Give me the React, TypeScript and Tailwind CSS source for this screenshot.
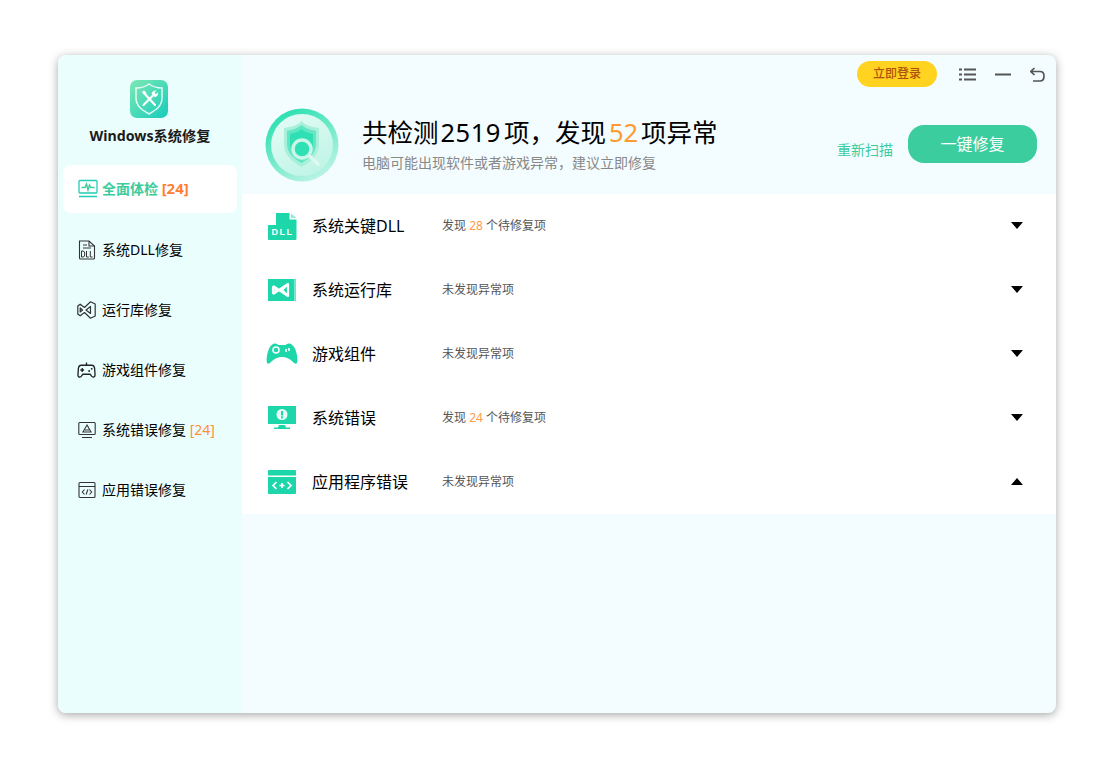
import React from "react";

const FONT = "font-['Noto_Sans','Noto_Sans_CJK_SC',sans-serif]";

const LogoIcon = () => (
  <svg width="38" height="38" viewBox="0 0 38 38">
    <defs>
      <linearGradient id="logoBg" x1="0" y1="0" x2="1" y2="1">
        <stop offset="0" stopColor="#7ee8b4" />
        <stop offset="1" stopColor="#16cdbb" />
      </linearGradient>
    </defs>
    <rect width="38" height="38" rx="7" fill="url(#logoBg)" />
    <path d="M19 4 C23 7 27 8 32 8 V18 C32 26 26 30 19 34 C12 30 6 26 6 18 V8 C11 8 15 7 19 4Z" fill="none" stroke="#fff" strokeOpacity="0.85" strokeWidth="1.5" />
    <path d="M13.500 12.500 L25 25" stroke="#fff" strokeWidth="2.200" strokeLinecap="round" />
    <path d="M12 12 L14 10.500 L16.500 13 L14.500 15 Z" fill="#fff" />
    <path d="M24 14.500 L13.500 25" stroke="#fff" strokeWidth="2.200" strokeLinecap="round" />
    <path d="M21.500 13.500 Q23 10 26.500 10.500 L24.500 12.800 L25.800 14.200 L28 12.200 Q28.500 16 24.800 17.200 Z" fill="#fff" />
  </svg>
);

const HeaderIcon = () => (
  <svg width="74" height="74" viewBox="0 0 74 74">
    <defs>
      <linearGradient id="ring" x1="0.2" y1="0" x2="0.8" y2="1">
        <stop offset="0" stopColor="#22dfad" />
        <stop offset="1" stopColor="#c4f5e7" />
      </linearGradient>
      <linearGradient id="inner" x1="0.2" y1="0" x2="0.8" y2="1">
        <stop offset="0" stopColor="#e4fbf6" />
        <stop offset="1" stopColor="#bdf4e4" />
      </linearGradient>
    </defs>
    <circle cx="37" cy="37" r="36.500" fill="url(#ring)" />
    <circle cx="37" cy="37" r="31" fill="url(#inner)" />
    <path d="M36.500 13 C40 17 46 19 54 20 V36 C54 47 46 54 36.500 59 C27 54 19 47 19 36 V20 C27 19 33 17 36.500 13Z" fill="#a8f0da" />
    <path d="M36.500 17 C40 20 45 22 51 23 V36 C51 45 44 51 36.500 55 C29 51 22 45 22 36 V23 C28 22 33 20 36.500 17Z" fill="#62e6c4" />
    <path d="M36.500 21 C40 24 44 25 48 26 V36 C48 43 42 48 36.500 51 C31 48 25 43 25 36 V26 C29 25 33 24 36.500 21Z" fill="#2fe0b5" />
    <circle cx="37" cy="41" r="9" fill="#2fe0b5" stroke="#c9f6e9" strokeWidth="3.500" />
    <path d="M45 48.500 L53 56" stroke="#def9f2" strokeWidth="3.500" strokeLinecap="round" />
  </svg>
);

const NavPulse = () => (
  <svg width="20" height="20" viewBox="0 0 20 20" fill="none" stroke="#22cdb4">
    <rect x="1" y="1.500" width="18" height="12.500" rx="1" strokeWidth="1.300" />
    <path d="M3.500 8.500 H7 L8.500 5 L10 11 L11.500 6 L12.800 8.500 H16.500" strokeWidth="1.400" stroke="#3ccd9f" />
    <path d="M1 17.500 H19" strokeWidth="1.500" />
  </svg>
);

const NavDll = () => (
  <svg width="18" height="20" viewBox="0 0 18 20" fill="none" stroke="#333" strokeWidth="1.100">
    <path d="M1.500 9 V1 H11 L16.500 6 V18 Q16.500 19 15.500 19 H2.500 Q1.500 19 1.500 18 V9" />
    <path d="M11 1 V6 H16.500 M5 5 H9 M5 8 H13" />
    <path d="M3.500 11 V17 H5 Q6.800 17 6.800 14 Q6.800 11 5 11 Z M8.500 11 V17 H10.800 M12.300 11 V17 H14.600" strokeWidth="1" />
  </svg>
);

const NavVs = () => (
  <svg width="19" height="18" viewBox="0 0 19 18" fill="none" stroke="#333" strokeWidth="1.200" strokeLinejoin="round">
    <path d="M13.500 0.800 L18.200 3 V15 L13.500 17.200 L7.500 11.500 L3.200 14.800 L0.800 13 V5 L3.200 3.200 L7.500 6.500 Z" />
    <path d="M13.500 5.500 V12.500 L9 9 Z M3.200 7 V11 L5.500 9 Z" />
  </svg>
);

const NavGame = () => (
  <svg width="20" height="18" viewBox="0 0 20 18" fill="none" stroke="#222" strokeWidth="1.400" strokeLinejoin="round">
    <path d="M4.500 4 H15.500 Q18 4 18.500 7 L19 14 Q19 16.500 17 16.500 Q15.800 16.500 15 15 L14 13.500 H6 L5 15 Q4.200 16.500 3 16.500 Q1 16.500 1 14 L1.500 7 Q2 4 4.500 4Z" />
    <path d="M10 4 V1 M5.500 7 V11 M3.500 9 H7.500" />
    <circle cx="12.800" cy="10" r="1" fill="#222" stroke="none" />
    <circle cx="15.500" cy="7.800" r="1" fill="#222" stroke="none" />
  </svg>
);

const NavError = () => (
  <svg width="18" height="18" viewBox="0 0 18 18" fill="none" stroke="#333" strokeWidth="1.100">
    <rect x="0.800" y="1.500" width="16.400" height="12" rx="1" />
    <path d="M9 4 L13 11 H5 Z M7 9 H11 M4 16.500 H14" />
  </svg>
);

const NavCode = () => (
  <svg width="18" height="18" viewBox="0 0 18 18" fill="none" stroke="#333" strokeWidth="1.100">
    <rect x="1" y="1.500" width="16" height="15" rx="1" />
    <path d="M1 5.500 H17 M6.500 8.500 L4.300 11 L6.500 13.500 M11.500 8.500 L13.700 11 L11.500 13.500 M9.900 8.500 L8.100 13.500" />
  </svg>
);

const RowDll = () => (
  <svg width="29" height="27" viewBox="0 0 29 27">
    <path d="M8 0 H21.500 V6.500 H28.500 V26 Q28.500 27 27.500 27 H1 Q0 27 0 26 V12 H8 Z" fill="#1dd6a9" />
    <path d="M23 0.500 L28.500 5 H23 Z" fill="#8ceed4" />
    <text x="14.500" y="22" textAnchor="middle" fontSize="9" fontWeight="700" fill="#fff" letterSpacing="1.500" fontFamily="'Liberation Sans',sans-serif">DLL</text>
  </svg>
);

const RowVs = () => (
  <svg width="28" height="24" viewBox="0 0 28 24">
    <path d="M0 1 H26.500 V23 H0 Z" fill="#1dd6a9" />
    <path d="M26.500 1 L28 0.500 V23.500 L26.500 23Z" fill="#6ce6c9" />
    <path d="M5 9 L8.500 12 L5 15 Z M20 6 V18 L14 12 Z" fill="none" stroke="#fff" strokeWidth="2.200" strokeLinejoin="round" />
    <path d="M5 8 L20 18 M5 16 L20 6" stroke="#fff" strokeWidth="2.200" />
  </svg>
);

const RowGame = () => (
  <svg width="32" height="22" viewBox="0 0 32 22">
    <path d="M8 0.500 Q11 0 12.500 2 H19.500 Q21 0 24 0.500 Q28.500 2 30.500 10 Q32 17 31 20 Q29.500 22 27 19 Q22 14 16 14 Q10 14 5 19 Q2.500 22 1 20 Q0 17 1.500 10 Q3.500 2 8 0.500Z" fill="#1dd6a9" />
    <circle cx="10" cy="7" r="3" fill="none" stroke="#fff" strokeWidth="1.500" />
    <path d="M20 6 V9 M23 5 V8" stroke="#fff" strokeWidth="1.600" />
  </svg>
);

const RowError = () => (
  <svg width="28" height="24" viewBox="0 0 28 24">
    <rect x="0" y="0" width="28" height="18" fill="#1dd6a9" />
    <circle cx="14" cy="8.500" r="5.500" fill="#e9fbf6" />
    <rect x="13" y="5" width="2" height="4.500" fill="#1dd6a9" />
    <rect x="13" y="10.300" width="2" height="2" fill="#1dd6a9" />
    <path d="M11 19 H17 L18 21.500 H22 V23 H6 V21.500 H10Z" fill="#1dd6a9" />
  </svg>
);

const RowCode = () => (
  <svg width="28" height="24" viewBox="0 0 28 24">
    <path d="M1 0 H27 Q28 0 28 1 V5.500 H0 V1 Q0 0 1 0Z" fill="#1dd6a9" />
    <path d="M0 7 H28 V23 Q28 24 27 24 H1 Q0 24 0 23Z" fill="#1dd6a9" />
    <path d="M8.500 12 L5 15.500 L8.500 19 M19.500 12 L23 15.500 L19.500 19 M14 13 V18 M11.500 15.500 H16.500" fill="none" stroke="#fff" strokeWidth="1.700" />
  </svg>
);

const Caret = ({ up }: { up?: boolean }) => (
  <svg width="12" height="7" viewBox="0 0 12 7">
    <path d={up ? "M6 0 L12 7 H0 Z" : "M0 0 H12 L6 7 Z"} fill="#000" />
  </svg>
);

const navItems = [
  { label: "系统DLL修复", icon: <NavDll /> },
  { label: "运行库修复", icon: <NavVs /> },
  { label: "游戏组件修复", icon: <NavGame /> },
  { label: "系统错误修复", icon: <NavError />, count: "[24]" },
  { label: "应用错误修复", icon: <NavCode /> },
];

const rows = [
  { label: "系统关键DLL", icon: <RowDll />, found: "28" },
  { label: "系统运行库", icon: <RowVs /> },
  { label: "游戏组件", icon: <RowGame /> },
  { label: "系统错误", icon: <RowError />, found: "24" },
  { label: "应用程序错误", icon: <RowCode />, up: true },
];

export default function App() {
  return (
    <div className={`${FONT} h-[760px] w-[1120px] overflow-hidden bg-white pl-[58px] pt-[55px]`}>
      <div className="flex h-[658px] w-[998px] overflow-hidden rounded-lg bg-[#f3fcff] shadow-[0_2px_10px_rgba(0,0,0,0.35)]">
        <aside className="flex w-[184px] shrink-0 flex-col bg-[#ebfefe] px-[5px]">
          <div className="flex flex-col items-center pt-[25px]">
            <div className="mr-[2px] flex">
              <LogoIcon />
            </div>
            <div className="mt-[8px] text-[14.2px] leading-[20px] font-bold text-[#1a1a1a]">Windows系统修复</div>
          </div>
          <nav className="mt-[19px] flex flex-col gap-3">
            <div className="flex h-12 items-center gap-[4px] rounded-lg bg-white pl-[15px] text-sm font-bold text-[#3ccd9f]">
              <NavPulse />
              <span>
                全面体检 <span className="text-[15px] text-[#ff7f32]">[24]</span>
              </span>
            </div>
            {navItems.map((item) => (
              <div key={item.label} className="flex h-12 items-center gap-[6px] pl-[14px] pt-[1px] text-sm text-black">
                <span className="flex w-[19px] justify-center">{item.icon}</span>
                <span>
                  {item.label}
                  {item.count && <span className="text-sm text-[#ff8f3a]"> {item.count}</span>}
                </span>
              </div>
            ))}
          </nav>
        </aside>

        <main className="flex flex-1 flex-col">
          <div className="flex h-[40px] items-center justify-end pr-[10px] pt-[1px]">
            <button className="mr-[22px] mb-[3px] h-[26px] w-[80px] rounded-full bg-[#ffd31f] text-xs font-medium text-[#b0500c]">立即登录</button>
            <div className="mb-[2px] flex items-center gap-[19px]">
              <svg width="17" height="13" viewBox="0 0 17 13" fill="#555">
                <rect x="0" y="0.500" width="3" height="2" />
                <rect x="5" y="0.500" width="12" height="2" />
                <rect x="0" y="5.500" width="3" height="2" />
                <rect x="5" y="5.500" width="12" height="2" />
                <rect x="0" y="10.500" width="3" height="2" />
                <rect x="5" y="10.500" width="12" height="2" />
              </svg>
              <svg width="16" height="13" viewBox="0 0 16 13" fill="#555">
                <rect x="0" y="5.500" width="16" height="2" />
              </svg>
              <svg width="16" height="16" viewBox="1 0 16 16" fill="none" stroke="#555" strokeWidth="1.700">
                <path d="M5.500 1 L1.800 4.500 L5.500 8 M2 4.500 H11 Q15 4.500 15 9 Q15 14 11 14 H4" />
              </svg>
            </div>
          </div>

          <header className="flex h-[99px] items-center pl-[23px] pr-[19px]">
            <HeaderIcon />
            <div className="ml-[23px]">
              <div className="flex items-center text-[25.5px] leading-[32px] text-black">
                共检测<span className="ml-[2px] mr-[3px] tracking-[0.5px]">2519</span>项，发现<span className="mx-[3px] text-[#ff9a2e]">52</span>项异常
              </div>
              <div className="mt-[5px] text-sm leading-[20px] text-[#888]">电脑可能出现软件或者游戏异常，建议立即修复</div>
            </div>
            <div className="ml-auto -mt-[1px] flex items-end gap-[15px]">
              <span className="mb-[3px] text-sm leading-[20px] text-[#3ccd9f]">重新扫描</span>
              <button className="h-[38px] w-[129px] rounded-[16px] bg-[#3ccd9f] text-base text-white">一键修复</button>
            </div>
          </header>

          <div className="bg-white">
            {rows.map((row) => (
              <div key={row.label} className="flex h-16 items-center pr-[33px]">
                <span className="ml-[24px] flex w-[32px] justify-center">{row.icon}</span>
                <span className="ml-[14px] w-[130px] text-base text-black">{row.label}</span>
                <span className="text-xs text-[#555]">
                  {row.found ? (
                    <>
                      发现 <span className="text-[#ff9a4a]">{row.found}</span> 个待修复项
                    </>
                  ) : (
                    "未发现异常项"
                  )}
                </span>
                <span className="mb-[2px] ml-auto flex">
                  <Caret up={row.up} />
                </span>
              </div>
            ))}
          </div>
        </main>
      </div>
    </div>
  );
}
